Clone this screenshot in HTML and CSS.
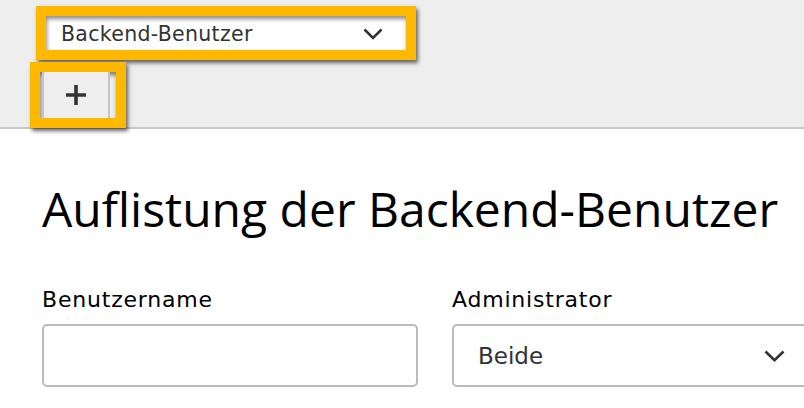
FILE: index.html
```html
<!DOCTYPE html>
<html lang="de">
<head>
<meta charset="utf-8">
<title>Backend-Benutzer</title>
<link rel="stylesheet" href="styles.css">
</head>
<body>
<header class="topbar">
  <div class="hl hl-select">
    <div class="menu-select">
      <span class="menu-label">Backend-Benutzer</span>
      <svg class="chev" width="20" height="12" viewBox="0 0 20 12"><path d="M1.5 1.5 L10 10 L18.5 1.5" fill="none" stroke="#333" stroke-width="2.6"/></svg>
    </div>
  </div>
  <div class="hl hl-plus">
    <div class="plus-btn">
      <svg width="20" height="20" viewBox="0 0 20 20"><path d="M10 0 V20 M0 10 H20" fill="none" stroke="#333" stroke-width="3.6"/></svg>
    </div>
  </div>
</header>
<main class="content">
  <h1 class="title">Auflistung der Backend-Benutzer</h1>
  <div class="form-row">
    <div class="field">
      <label class="field-label">Benutzername</label>
      <div class="input"></div>
    </div>
    <div class="field">
      <label class="field-label">Administrator</label>
      <div class="input select">
        <span>Beide</span>
        <svg class="chev2" width="21" height="12" viewBox="0 0 21 12"><path d="M1.5 1.5 L10.5 10.2 L19.5 1.5" fill="none" stroke="#333" stroke-width="2.6"/></svg>
      </div>
    </div>
  </div>
</main>
</body>
</html>
```
FILE: styles.css
```css
html, body {
  margin: 0;
  padding: 0;
  background: #ffffff;
  overflow: hidden;
}
body {
  width: 804px;
  height: 408px;
  font-family: "DejaVu Sans", Verdana, sans-serif;
  color: #333;
}
.topbar {
  background: #eeeeee;
  height: 129px;
  border-bottom: 2px solid #c8c8c8;
  padding-top: 6px;
  box-sizing: border-box;
  position: relative;
  z-index: 1;
}
.hl {
  border: 10px solid #ffb800;
  box-sizing: border-box;
  box-shadow: 2px 3px 4px rgba(0,0,0,0.6), inset 1px 3px 4px rgba(0,0,0,0.5);
}
.hl-select {
  margin-left: 36px;
  width: 380px;
  height: 54px;
}
.menu-select {
  height: 100%;
  background: #ffffff;
  display: flex;
  align-items: center;
  justify-content: space-between;
  padding: 0 23px 0 15px;
  box-shadow: inset 1px 3px 4px rgba(0,0,0,0.45);
}
.menu-label {
  font-size: 20.5px;
  letter-spacing: 0.3px;
  color: #333;
  margin-top: 1px;
}
.chev { display: block; margin-top: 1px; }
.hl-plus {
  margin-left: 30px;
  margin-top: 2px;
  width: 96px;
  height: 66px;
  position: relative;
  z-index: 2;
}
.plus-btn {
  margin-left: 2px;
  width: 68px;
  height: 100%;
  box-sizing: border-box;
  border-left: 2px solid #c4c4c4;
  border-right: 2px solid #c4c4c4;
  background: #eeeeee;
  display: flex;
  align-items: center;
  justify-content: center;
}
.plus-btn svg { display: block; }
.content {
  padding: 0 0 0 42px;
}
.title {
  margin: 50px 0 0 0;
  font-family: "Open Sans", sans-serif;
  font-weight: 400;
  font-size: 48px;
  line-height: 60px;
  color: #000;
  letter-spacing: 0;
  white-space: nowrap;
}
.form-row {
  display: grid;
  grid-template-columns: 376px 376px;
  column-gap: 34px;
  margin-top: 47px;
}
.field-label {
  display: block;
  font-size: 22px;
  letter-spacing: 0.8px;
  line-height: 28px;
  color: #000;
}
.input {
  margin-top: 10px;
  height: 63px;
  box-sizing: border-box;
  border: 2px solid #bbbbbb;
  border-radius: 5px;
  background: #fefefe;
}
.select {
  display: flex;
  align-items: center;
  justify-content: space-between;
  padding: 0 41px 0 24px;
  font-size: 23px;
  color: #333;
}
.chev2 { display: block; }
```
